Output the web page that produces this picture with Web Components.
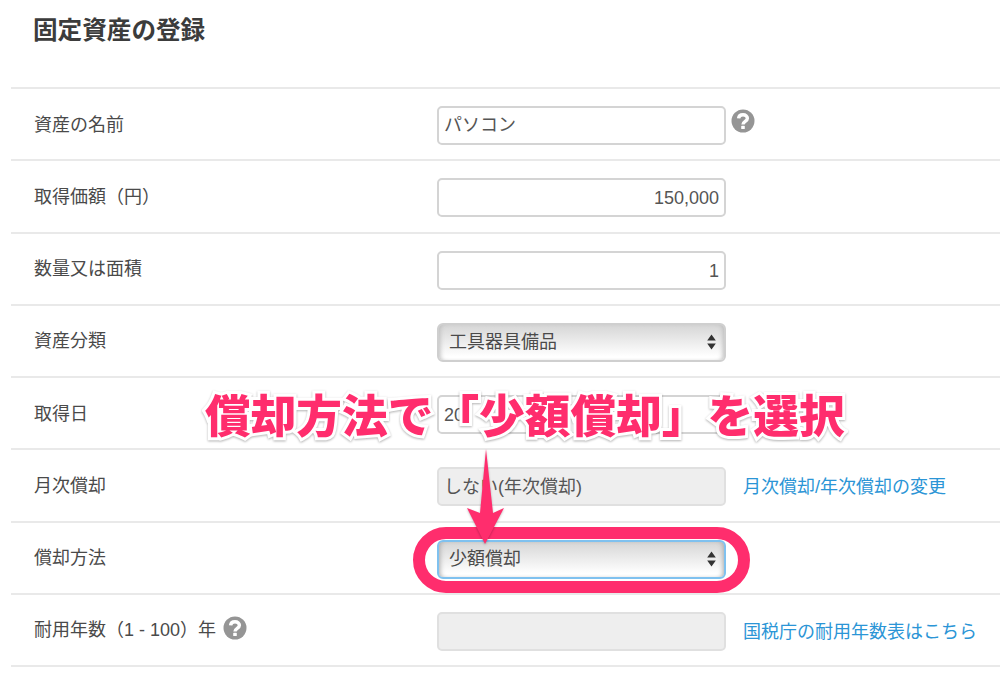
<!DOCTYPE html>
<html lang="ja">
<head>
<meta charset="utf-8">
<title>固定資産の登録</title>
<style>
  html, body { margin: 0; padding: 0; background: #fff; }
  body {
    width: 1000px;
    height: 675px;
    overflow: hidden;
    position: relative;
    font-family: "Liberation Sans", "Noto Sans CJK JP", sans-serif;
    color: #4a4a4a;
  }
  a.side { color: #2b95d6; text-decoration: none; font-size: 18px; margin-left: 17px; white-space: nowrap; }
</style>
</head>
<body>
<asset-form heading="固定資産の登録">
  <form-row label="資産の名前">
    <text-field>パソコン</text-field>
    <help-icon slot="after" style="margin:-6px 0 0 5px"></help-icon>
  </form-row>
  <form-row label="取得価額（円）"><text-field align="right">150,000</text-field></form-row>
  <form-row label="数量又は面積"><text-field align="right">1</text-field></form-row>
  <form-row label="資産分類"><select-field>工具器具備品</select-field></form-row>
  <form-row label="取得日"><text-field style="padding-top:2px;padding-bottom:0">20</text-field></form-row>
  <form-row label="月次償却">
    <text-field disabled>しない(年次償却)</text-field>
    <a class="side" slot="after" href="#">月次償却/年次償却の変更</a>
  </form-row>
  <form-row label="償却方法"><select-field focused>少額償却</select-field></form-row>
  <form-row label="耐用年数（1 - 100）年" help>
    <text-field disabled></text-field>
    <a class="side" slot="after" href="#">国税庁の耐用年数表はこちら</a>
  </form-row>
</asset-form>
<callout-overlay>償却方法で「少額償却」を選択</callout-overlay>

<script>
class AssetForm extends HTMLElement {
  constructor() {
    super();
    this.attachShadow({ mode: "open" });
  }

  connectedCallback() {
    this.shadowRoot.innerHTML = `
      <style>
        :host { display: block; padding-left: 11px; }
        h1 {
          margin: 0;
          padding: 15px 0 0 22px;
          height: 87px;
          box-sizing: border-box;
          font-size: 24.6px;
          line-height: 32px;
          font-weight: 700;
          color: #3c3c3c;
        }
        .rows { border-bottom: 2px solid #e9e9e9; }
      </style>
      <h1>${this.getAttribute("heading")}</h1>
      <div class="rows"><slot></slot></div>`;
  }
}

class FormRow extends HTMLElement {
  constructor() {
    super();
    this.attachShadow({ mode: "open" });
  }

  connectedCallback() {
    const help = this.hasAttribute("help") ? `<help-icon></help-icon>` : "";
    this.shadowRoot.innerHTML = `
      <style>
        :host {
          display: grid;
          grid-template-columns: 426px 289px auto;
          align-items: center;
          height: 72.25px;
          box-sizing: border-box;
          border-top: 2px solid #e9e9e9;
          font-size: 18px;
        }
        .label {
          display: flex;
          align-items: center;
          gap: 7px;
          padding: 0 0 3px 23px;
          color: #4a4a4a;
        }
        .after { display: flex; align-items: center; }
      </style>
      <div class="label"><span>${this.getAttribute("label")}</span>${help}</div>
      <slot></slot>
      <div class="after"><slot name="after"></slot></div>`;
  }
}

class TextField extends HTMLElement {
  constructor() {
    super();
    this.attachShadow({ mode: "open" });
  }

  connectedCallback() {
    this.shadowRoot.innerHTML = `
      <style>
        :host {
          display: flex;
          align-items: center;
          height: 39px;
          box-sizing: border-box;
          padding: 0 5px 5px 5px;
          border: 2px solid #d4d4d4;
          border-radius: 5px;
          background: #fff;
          color: #555;
          font-size: 18px;
          margin-top: 3px;
        }
        :host([align="right"]) { justify-content: flex-end; padding: 2px 5px 0 5px; }
        :host([disabled]) { background: #eeeeee; border-color: #e0e0e0; padding-bottom: 3px; }
      </style>
      <slot></slot>`;
  }
}

class SelectField extends HTMLElement {
  constructor() {
    super();
    this.attachShadow({ mode: "open" });
  }

  connectedCallback() {
    this.shadowRoot.innerHTML = `
      <style>
        :host {
          display: flex;
          align-items: center;
          justify-content: space-between;
          height: 39px;
          box-sizing: border-box;
          padding: 0 8px 5px 10px;
          border: 2px solid #cfcfcf;
          border-radius: 6px;
          background: linear-gradient(#d6d6d6, #e6e6e6 35%, #ffffff 90%);
          box-shadow: inset 4px 0 5px -3px #bbb, inset -4px 0 5px -3px #bbb;
          color: #4a4a4a;
          font-size: 18px;
          margin-top: 3px;
        }
        :host([focused]) {
          border-color: #7fc1ef;
          box-shadow: inset 4px 0 5px -3px #aaa, inset -4px 0 5px -3px #aaa;
        }
        svg { display: block; margin-top: 5px; }
      </style>
      <span><slot></slot></span>
      <svg width="9" height="16" viewBox="0 0 9 16"><path fill="#333" d="M4.5 0.5L8.8 6.6H0.2zM4.5 15.5L0.2 9.4H8.8z"/></svg>`;
  }
}

class HelpIcon extends HTMLElement {
  constructor() {
    super();
    this.attachShadow({ mode: "open" });
  }

  connectedCallback() {
    this.shadowRoot.innerHTML = `
      <style>
        :host { display: inline-block; width: 24px; height: 24px; }
        svg { display: block; }
      </style>
      <svg width="24" height="24" viewBox="0 0 24 24">
        <circle cx="12" cy="12" r="11.5" fill="#959595"/>
        <path fill="none" stroke="#fff" stroke-width="3.4" d="M7.6 9.4C7.8 6.9 9.6 5.8 12 5.8c2.6 0 4.4 1.4 4.4 3.5 0 3.300-4.400 3-4.400 6.300"/>
        <rect x="10.200" y="16.800" width="3.600" height="3.300" rx="0.600" fill="#fff"/>
      </svg>`;
  }
}

// the pink annotation drawn over the form
class CalloutOverlay extends HTMLElement {
  constructor() {
    super();
    this.attachShadow({ mode: "open" });
  }

  connectedCallback() {
    this.shadowRoot.innerHTML = `
      <style>
        :host { position: absolute; inset: 0; display: block; pointer-events: none; }
        .caption {
          position: absolute;
          left: 205px;
          top: 380px;
          white-space: nowrap;
          font-family: "Noto Sans CJK JP", sans-serif;
          font-size: 45.7px;
          line-height: 66px;
          font-weight: 900;
          color: #ff2d6d;
          -webkit-text-stroke: 6px #fff;
          paint-order: stroke fill;
          filter: drop-shadow(0 1px 1px rgba(0,0,0,.3));
        }
        .ring {
          position: absolute;
          left: 413px;
          top: 527px;
          width: 337px;
          height: 66px;
          box-sizing: border-box;
          border: 12px solid #ff2d6d;
          border-radius: 33px;
        }
        svg { position: absolute; left: 460px; top: 445px; filter: drop-shadow(0 1px 1px rgba(0,0,0,.25)); }
      </style>
      <div class="ring"></div>
      <svg width="52" height="102" viewBox="0 0 52 102">
        <path fill="#ff2d6d" d="M26 4L33 68L44 63L25 99L7 63L20 68z"/>
      </svg>
      <div class="caption"><slot></slot></div>`;
  }
}

customElements.define("asset-form", AssetForm);
customElements.define("form-row", FormRow);
customElements.define("text-field", TextField);
customElements.define("select-field", SelectField);
customElements.define("help-icon", HelpIcon);
customElements.define("callout-overlay", CalloutOverlay);
</script>
</body>
</html>
